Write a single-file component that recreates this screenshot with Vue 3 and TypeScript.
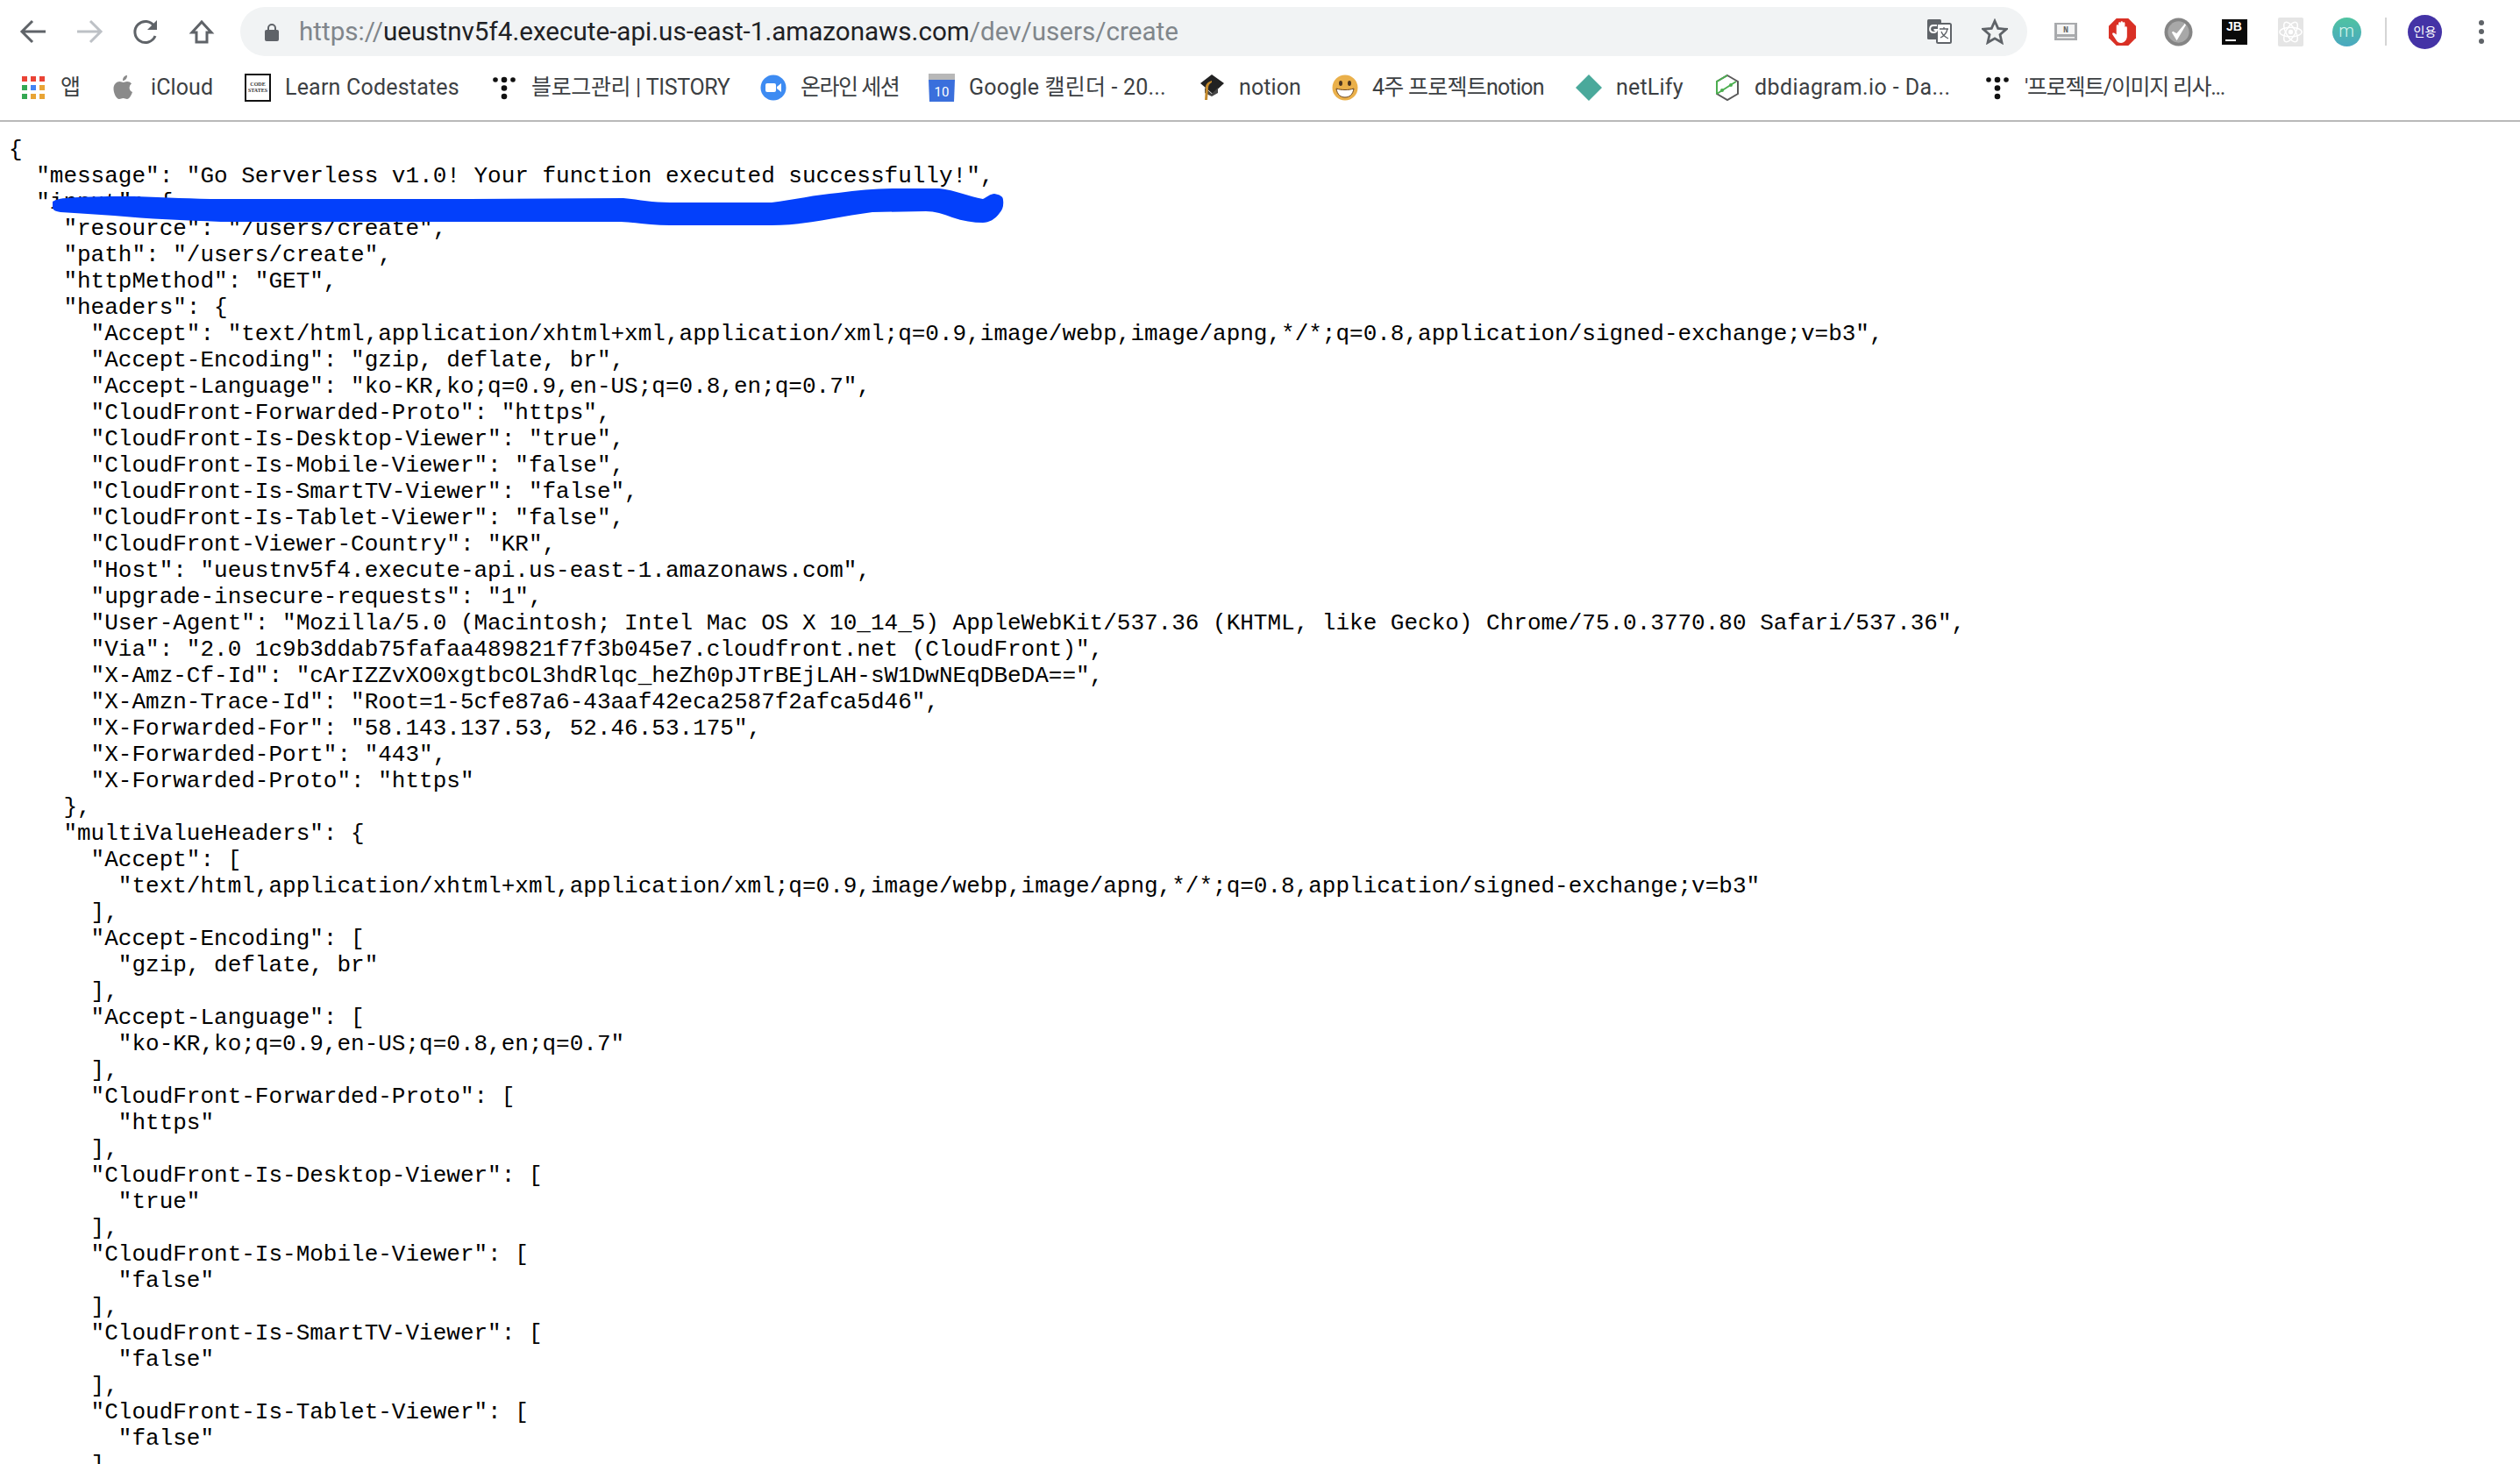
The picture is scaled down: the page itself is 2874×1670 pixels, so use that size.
<script setup lang="ts">
const jsonText = `{
  "message": "Go Serverless v1.0! Your function executed successfully!",
  "input": {
    "resource": "/users/create",
    "path": "/users/create",
    "httpMethod": "GET",
    "headers": {
      "Accept": "text/html,application/xhtml+xml,application/xml;q=0.9,image/webp,image/apng,*/*;q=0.8,application/signed-exchange;v=b3",
      "Accept-Encoding": "gzip, deflate, br",
      "Accept-Language": "ko-KR,ko;q=0.9,en-US;q=0.8,en;q=0.7",
      "CloudFront-Forwarded-Proto": "https",
      "CloudFront-Is-Desktop-Viewer": "true",
      "CloudFront-Is-Mobile-Viewer": "false",
      "CloudFront-Is-SmartTV-Viewer": "false",
      "CloudFront-Is-Tablet-Viewer": "false",
      "CloudFront-Viewer-Country": "KR",
      "Host": "ueustnv5f4.execute-api.us-east-1.amazonaws.com",
      "upgrade-insecure-requests": "1",
      "User-Agent": "Mozilla/5.0 (Macintosh; Intel Mac OS X 10_14_5) AppleWebKit/537.36 (KHTML, like Gecko) Chrome/75.0.3770.80 Safari/537.36",
      "Via": "2.0 1c9b3ddab75fafaa489821f7f3b045e7.cloudfront.net (CloudFront)",
      "X-Amz-Cf-Id": "cArIZZvXO0xgtbcOL3hdRlqc_heZh0pJTrBEjLAH-sW1DwNEqDBeDA==",
      "X-Amzn-Trace-Id": "Root=1-5cfe87a6-43aaf42eca2587f2afca5d46",
      "X-Forwarded-For": "58.143.137.53, 52.46.53.175",
      "X-Forwarded-Port": "443",
      "X-Forwarded-Proto": "https"
    },
    "multiValueHeaders": {
      "Accept": [
        "text/html,application/xhtml+xml,application/xml;q=0.9,image/webp,image/apng,*/*;q=0.8,application/signed-exchange;v=b3"
      ],
      "Accept-Encoding": [
        "gzip, deflate, br"
      ],
      "Accept-Language": [
        "ko-KR,ko;q=0.9,en-US;q=0.8,en;q=0.7"
      ],
      "CloudFront-Forwarded-Proto": [
        "https"
      ],
      "CloudFront-Is-Desktop-Viewer": [
        "true"
      ],
      "CloudFront-Is-Mobile-Viewer": [
        "false"
      ],
      "CloudFront-Is-SmartTV-Viewer": [
        "false"
      ],
      "CloudFront-Is-Tablet-Viewer": [
        "false"
      ],`;

interface Bookmark {
  label: string;
  icon: string;
  width: number;
  spacing: number;
}

const bookmarks: Bookmark[] = [
  { label: "앱", icon: "apps", width: 103, spacing: 0 },
  { label: "iCloud", icon: "apple", width: 153, spacing: 0.1 },
  { label: "Learn Codestates", icon: "code", width: 281, spacing: 0.2 },
  { label: "블로그관리 | TISTORY", icon: "tistory", width: 307, spacing: -0.35 },
  { label: "온라인 세션", icon: "zoom", width: 192, spacing: -1.5 },
  { label: "Google 캘린더 - 20...", icon: "cal", width: 308, spacing: 0.2 },
  { label: "notion", icon: "cap", width: 152, spacing: 0.1 },
  { label: "4주 프로젝트notion", icon: "smile", width: 278, spacing: -0.75 },
  { label: "netLify", icon: "net", width: 158, spacing: 0.2 },
  { label: "dbdiagram.io - Da...", icon: "db", width: 308, spacing: 0.4 },
  { label: "'프로젝트/이미지 리사...", icon: "tistory", width: 300, spacing: -1.3 },
];
</script>

<template>
  <div class="page">
    <header class="chrome">
      <div class="toolbar">
        <div class="nav">
          <svg class="nav-icon" viewBox="0 0 32 32"><path d="M30 16H4M15 4 3 16l12 12" fill="none" stroke="#5f6368" stroke-width="3" /></svg>
          <svg class="nav-icon" viewBox="0 0 32 32"><path d="M2 16h26M17 4l12 12-12 12" fill="none" stroke="#bdc1c6" stroke-width="3" /></svg>
          <svg class="nav-icon" viewBox="0 0 32 32"><path d="M27 21a12 12 0 1 1-1-11" fill="none" stroke="#5f6368" stroke-width="3" /><path d="M29 3v11H18z" fill="#5f6368" /></svg>
          <svg class="nav-icon" viewBox="0 0 32 32"><path d="M16 5 5 17h5v11h12V17h5z" fill="none" stroke="#5f6368" stroke-width="3" /></svg>
        </div>
        <div class="omnibox">
          <svg class="lock" viewBox="0 0 16 21"><path d="M4 9V6a4 4 0 0 1 8 0v3" fill="none" stroke="#5f6368" stroke-width="2" /><rect x="0" y="8" width="16" height="13" rx="2" fill="#5f6368" /></svg>
          <span class="url"><span class="dim">https://</span>ueustnv5f4.execute-api.us-east-1.amazonaws.com<span class="dim">/dev/users/create</span></span>
          <svg class="translate" viewBox="0 0 28 28"><rect x="0" y="0" width="16" height="23" rx="1.5" fill="#5f6368" /><rect x="11" y="5" width="16" height="22" rx="1.5" fill="#fff" stroke="#5f6368" stroke-width="2" /><path d="M14 11h10M19 9v2M23 11c-1 5-4 8-8 10M16 14c1 3 4 6 8 8" fill="none" stroke="#5f6368" stroke-width="1.3" /><path d="M11 7H7a4 4 0 1 0 4 5H7.500" fill="none" stroke="#fff" stroke-width="2" /></svg>
          <svg class="star" viewBox="0 0 30 30"><path d="M15 3l3.700 8.400 9.300.9-7 6.200 2 9-8-4.700-8 4.700 2-9-7-6.200 9.300-.9z" fill="none" stroke="#5f6368" stroke-width="2.800" /></svg>
        </div>
        <div class="extensions">
          <div class="slot"><svg class="ext-note" viewBox="0 0 26 20"><rect width="26" height="20" fill="#a8aaad" /><rect x="3" y="2" width="20" height="11" fill="#f4f4f4" /><rect x="3" y="16" width="20" height="1.500" fill="#f4f4f4" /><text x="13" y="11" text-anchor="middle" class="ext-n">N</text></svg></div>
          <div class="slot"><svg class="ext-round" viewBox="0 0 34 34"><path d="M10 1h14l9 9v14l-9 9H10l-9-9V10z" fill="#d93025" /><path d="M10 20V10c0-2 2.500-2 2.500 0v4-7c0-2 2.500-2 2.500 0v7-8c0-2 2.500-2 2.500 0v8-7c0-2 2.500-2 2.500 0v9-4c0-2 2.500-2 2.500 0v10c0 4-3 8-7 8-3 0-5-2-6-4l-4-6c-1-2 1-2.500 2.500-1.500z" fill="#fff" /></svg></div>
          <div class="slot"><svg class="ext-round" viewBox="0 0 34 34"><circle cx="17" cy="17" r="16.500" fill="#858585" /><circle cx="17" cy="17" r="12.500" fill="#a8a8a8" /><path d="M10 17l5 8 10-17-10 12z" fill="#fff" stroke="#fff" stroke-width="2" /></svg></div>
          <div class="slot"><div class="ext-jb"><span>JB</span><i></i></div></div>
          <div class="slot"><svg class="ext-round" viewBox="0 0 34 34"><rect x="2" width="30" height="34" rx="2" fill="#e5e5e5" /><g fill="none" stroke="#fff" stroke-width="1.500"><ellipse cx="17" cy="17" rx="13" ry="5.500" /><ellipse cx="17" cy="17" rx="13" ry="5.500" transform="rotate(60 17 17)" /><ellipse cx="17" cy="17" rx="13" ry="5.500" transform="rotate(120 17 17)" /></g><circle cx="17" cy="17" r="2.800" fill="#fff" /></svg></div>
          <div class="slot"><div class="ext-m">m</div></div>
          <span class="divider"></span>
          <div class="avatar">인용</div>
          <div class="menu"><i></i><i></i><i></i></div>
        </div>
      </div>
      <nav class="bookmarks">
        <div v-for="b in bookmarks" :key="b.label" class="bookmark" :style="{ width: b.width + 'px' }">
          <span class="bm-icon">
            <svg v-if="b.icon === 'apps'" viewBox="0 0 30 30">
              <rect x="2" y="2" width="6" height="6" fill="#ea4335" /><rect x="12" y="2" width="6" height="6" fill="#ea4335" /><rect x="22" y="2" width="6" height="6" fill="#ea4335" />
              <rect x="2" y="12" width="6" height="6" fill="#34a853" /><rect x="12" y="12" width="6" height="6" fill="#4285f4" /><rect x="22" y="12" width="6" height="6" fill="#e8a435" />
              <rect x="2" y="22" width="6" height="6" fill="#34a853" /><rect x="12" y="22" width="6" height="6" fill="#e8a435" /><rect x="22" y="22" width="6" height="6" fill="#e8a435" />
            </svg>
            <svg v-else-if="b.icon === 'apple'" viewBox="0 0 30 30"><path d="M19 8c2 0 3.500.7 5 2.500-3.500 2.500-3 8 1 9.500-1.500 4-3.500 8-6 8-2 0-2.500-1-4.500-1s-2.500 1-4.500 1C6.500 28 3.500 21 3.500 16c0-5 3.500-8 7-8 1.800 0 3 1 4.200 1s2.500-1 4.300-1zM19 1c0 3.500-2 6-5 6 0-3.500 2-6 5-6z" fill="#8a8a8a" /></svg>
            <div v-else-if="b.icon === 'code'" class="code-logo"><span>CODE<br />STATES</span></div>
            <svg v-else-if="b.icon === 'tistory'" viewBox="0 0 30 30"><g fill="#111"><circle cx="5" cy="6" r="2.800" /><circle cx="15" cy="6" r="3.300" /><circle cx="25" cy="6" r="2.800" /><circle cx="15" cy="15.500" r="3.300" /><circle cx="15" cy="25" r="3.300" /></g></svg>
            <svg v-else-if="b.icon === 'zoom'" viewBox="0 0 30 30"><circle cx="15" cy="15" r="14.500" fill="#3d8bf2" /><rect x="6" y="10" width="12" height="10" rx="2" fill="#fff" /><path d="M19 14l5-4v10l-5-4z" fill="#fff" /></svg>
            <svg v-else-if="b.icon === 'cal'" viewBox="0 0 30 30"><path d="M0 -1h30v7H0z" fill="#b8b8b8" /><path d="M0 6h30l-1 25H1z" fill="#3a6fdc" /><text x="15" y="25" text-anchor="middle" class="cal-num">10</text></svg>
            <svg v-else-if="b.icon === 'cap'" viewBox="0 0 30 30"><path d="M15 0l14 10-13 12L2 10z" fill="#222" /><path d="M7 15l8 7 7-7v6l-7 4-8-4z" fill="#444" /><path d="M15 7c-5 2-7 4-7 8l-1 14h3l1-14c0-3 2-5 4-6z" fill="#c48a2c" /></svg>
            <svg v-else-if="b.icon === 'smile'" viewBox="0 0 30 30"><circle cx="15" cy="15" r="14.500" fill="#eab04a" /><ellipse cx="10" cy="10" rx="2" ry="3" fill="#4a3420" /><ellipse cx="20" cy="10" rx="2" ry="3" fill="#4a3420" /><path d="M5 16c6 2 14 2 20 0-1 7-5 10-10 10S6 23 5 16z" fill="#fff" stroke="#6a4520" stroke-width="1" /></svg>
            <svg v-else-if="b.icon === 'net'" viewBox="0 0 30 30"><path d="M15 0l15 15-15 15L0 15z" fill="#4aa99b" /></svg>
            <svg v-else viewBox="0 0 30 30"><path d="M15 1l12 7v14l-12 7-12-7V8z" fill="none" stroke="#5a5a5a" stroke-width="2" /><path d="M15 1 3 8v14M3 22l22-14" fill="none" stroke="#4caf50" stroke-width="2" /><circle cx="9" cy="18" r="2" fill="#4caf50" /><circle cx="19" cy="12" r="2" fill="#4caf50" /></svg>
          </span>
          <span class="bm-label" :style="{ letterSpacing: b.spacing + 'px' }">{{ b.label }}</span>
        </div>
      </nav>
    </header>
    <main class="body">
      <pre class="json">{{ jsonText }}</pre>
      <svg class="scribble" viewBox="50 200 1100 70" aria-hidden="true">
        <path d="M60 230C65 227 70 226 76 226C100 224 130 224 153 224C190 225 220 227 252 227L536 227L711 226C730 228 745 231 765 231L880 231C905 228 930 222 956 220C980 217 1000 215 1025 215L1071 215C1090 217 1105 224 1121 227C1125 225 1130 221 1134 221C1140 222 1144 224 1144 228C1145 235 1143 240 1140 243C1135 250 1128 254 1121 254C1110 254 1098 252 1086 248C1076 244 1066 241 1056 241L995 242C955 247 920 257 880 257L765 257C745 257 725 254 708 253L252 253C210 251 170 250 130 246C110 245 90 243 69 242C62 241 60 239 60 236Z" fill="#0340fb" />
      </svg>
    </main>
  </div>
</template>

<style>
html,
body {
  margin: 0;
  background: #fff;
  overflow: hidden;
}
</style>

<style scoped>
.page {
  width: 2874px;
  height: 1670px;
  overflow: hidden;
  display: flex;
  flex-direction: column;
  font-family: "Roboto", "Noto Sans CJK KR", sans-serif;
}
.chrome {
  height: 137px;
  flex: none;
  border-bottom: 2px solid #b9b9b9;
  display: flex;
  flex-direction: column;
}
.toolbar {
  height: 66px;
  padding: 8px 0 0 0;
  box-sizing: border-box;
  display: flex;
  align-items: flex-start;
  flex: none;
}
.nav {
  display: flex;
  gap: 32px;
  padding: 12px 0 0 22px;
  width: 274px;
  box-sizing: border-box;
  flex: none;
}
.nav-icon {
  width: 32px;
  height: 32px;
}
.omnibox {
  width: 2038px;
  height: 56px;
  flex: none;
  border-radius: 28px;
  background: #f1f3f4;
  display: flex;
  align-items: center;
  padding: 0 22px 0 28px;
  box-sizing: border-box;
}
.lock {
  width: 16px;
  height: 21px;
  flex: none;
}
.url {
  margin-left: 23px;
  font-size: 29.6px;
  color: #202124;
  flex: 1;
  white-space: nowrap;
}
.dim {
  color: #80868b;
}
.translate {
  width: 28px;
  height: 28px;
  margin-right: 34px;
  flex: none;
}
.star {
  width: 30px;
  height: 30px;
  flex: none;
}
.extensions {
  flex: 1;
  height: 56px;
  display: flex;
  align-items: center;
  padding-left: 12px;
}
.slot {
  width: 64px;
  height: 40px;
  flex: none;
  display: flex;
  align-items: center;
  justify-content: center;
}
.ext-note {
  width: 26px;
  height: 20px;
}
.ext-n {
  font: 700 10px "Liberation Mono", monospace;
  fill: #666;
}
.ext-round {
  width: 33px;
  height: 33px;
}
.ext-jb {
  width: 29px;
  height: 29px;
  background: #0a0a0a;
  color: #fff;
  font: 700 14px "Liberation Sans", sans-serif;
  line-height: 17px;
  text-align: center;
  position: relative;
}
.ext-jb i {
  position: absolute;
  left: 4px;
  bottom: 4px;
  width: 12px;
  height: 2px;
  background: #fff;
}
.ext-m {
  width: 33px;
  height: 33px;
  border-radius: 50%;
  background: linear-gradient(#4fc3a1, #4aa8c0);
  color: #d8f5ef;
  font: 300 20px "Roboto", sans-serif;
  line-height: 30px;
  text-align: center;
}
.divider {
  width: 2px;
  height: 32px;
  background: #d5d5d5;
  flex: none;
  margin-left: 12px;
}
.avatar {
  width: 39px;
  height: 39px;
  border-radius: 50%;
  background: #4433a6;
  color: #fff;
  font-size: 14px;
  line-height: 39px;
  text-align: center;
  flex: none;
  margin-left: 24px;
}
.menu {
  display: flex;
  flex-direction: column;
  gap: 4.5px;
  margin-left: 42px;
}
.menu i {
  width: 6px;
  height: 6px;
  border-radius: 50%;
  background: #5f6368;
}
.bookmarks {
  height: 67px;
  display: flex;
  align-items: center;
  padding-left: 23px;
  flex: none;
}
.bookmark {
  display: flex;
  align-items: center;
  flex: none;
  gap: 16px;
  height: 36px;
}
.bm-icon {
  width: 30px;
  height: 30px;
  flex: none;
  display: flex;
  align-items: center;
  justify-content: center;
}
.bm-icon svg {
  width: 100%;
  height: 100%;
  overflow: visible;
}
.bm-label {
  font-size: 25px;
  line-height: 30px;
  color: #3c4043;
  white-space: nowrap;
}
.cal-num {
  font: 400 15px "Roboto", sans-serif;
  fill: #fff;
}
.code-logo {
  width: 30px;
  height: 32px;
  border: 2px solid #111;
  box-sizing: border-box;
  display: flex;
  align-items: center;
  justify-content: center;
  text-align: center;
  font: 700 6px/7px "Liberation Serif", serif;
  color: #333;
  flex: none;
}
.body {
  position: relative;
  flex: 1;
}
.json {
  margin: 0;
  padding: 17px 0 0 10px;
  font-family: "Liberation Mono", monospace;
  font-size: 26px;
  line-height: 30px;
  color: #000;
}
.scribble {
  position: absolute;
  left: 50px;
  top: 61px;
  width: 1100px;
  height: 70px;
}
</style>
